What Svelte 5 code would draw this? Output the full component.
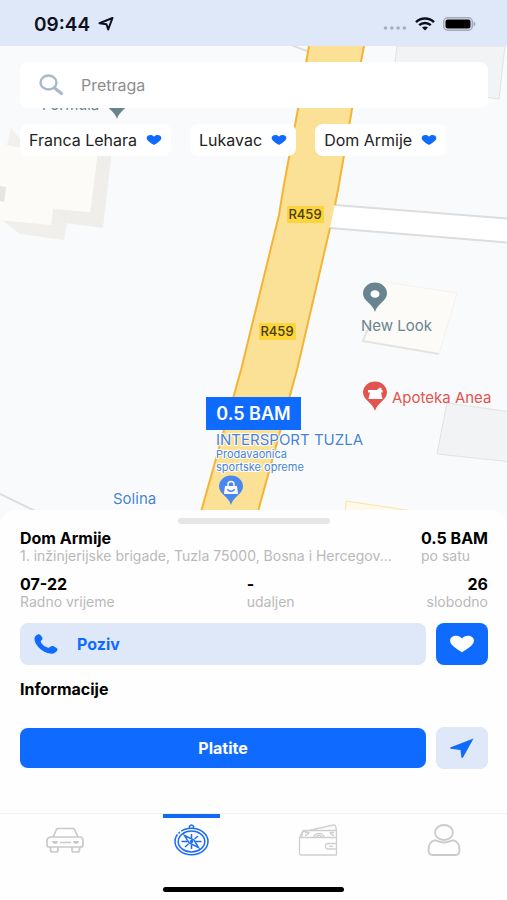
<script>
	const places = ['Franca Lehara', 'Lukavac', 'Dom Armije'];

	const heart =
		'M12 21C10 19.300 1 13.500 1 7.700 1 4 3.700 2 6.600 2c2.300 0 4.300 1.300 5.400 3.200C13.100 3.300 15.100 2 17.400 2 20.300 2 23 4 23 7.700 23 13.500 14 19.300 12 21z';
	const pin = 'M0 28C-2 20-12 17-12 9.500A12 11 0 0 1 12 9.500C12 17 2 20 0 28z';

	let search = $state('');
	let active = $state('map');
</script>

<div class="screen">
	<header class="status">
		<div class="time">
			<span>09:44</span>
			<svg width="16" height="14" viewBox="0 0 16 14">
				<path d="M14.500 1 10.200 12.500 8.500 7.200 1.500 6.200z" fill="none" stroke="#0c101c" stroke-width="2" stroke-linejoin="round" />
			</svg>
		</div>
		<div class="signals">
			<svg width="24" height="18" viewBox="0 0 24 18" fill="#a6afbf">
				<circle cx="2.500" cy="13" r="1.800" /><circle cx="8.800" cy="13" r="1.800" />
				<circle cx="15.100" cy="13" r="1.800" /><circle cx="21.400" cy="13" r="1.800" />
			</svg>
			<svg width="20" height="14" viewBox="0 0 20 14" fill="none" stroke="#0c101c" stroke-width="2.500">
				<path d="M1 5.200C6 .300 14 .300 19 5.200M4.200 8.200c3.300-3 8.300-3 11.600 0" />
				<path d="M7 10.600c1.700-1.500 4.300-1.500 6 0L10 13.500z" fill="#0c101c" stroke="none" />
			</svg>
			<svg width="33" height="14" viewBox="0 0 33 14">
				<rect x=".7" y=".7" width="28.600" height="12.600" rx="4" fill="none" stroke="#a2a9b8" stroke-width="1.400" />
				<rect x="2.500" y="2.500" width="25" height="9" rx="2" fill="#000" />
				<path d="M30.500 4.500c2.500.500 2.500 4.500 0 5z" fill="#a2a9b8" />
			</svg>
		</div>
	</header>

	<main>
		<section class="map">
			<svg class="canvas" viewBox="0 46 507 480" preserveAspectRatio="xMinYMin slice">
				<!-- buildings -->
				<path d="M397 46 392 85 499 99 505 46z" fill="#f2f3f5" stroke="#e0e2e4" />
				<path d="M98 150h14l-9 78-38-5-12-14 37 3z" fill="#f0eeea" />
				<path d="M53 208l14 16-3 16-44-6-18-14 49 4z" fill="#f1efeb" />
				<path d="M11 128l10 12v8L7 145z" fill="#f2f0ed" />
				<path d="M0 144l20 4V132l79 10-9 70-37-4-2 17-51-5z" fill="#fcfbf7" />
				<path d="M0 186l6 1-2 15-4-1z" fill="#e6e5e2" />
				<path d="M379 281l78 12-18 61-76-13z" fill="#fcfbf8" />
				<path d="M379 281l78 12-18 61" fill="none" stroke="#f5f3ef" />
				<path d="M439 354l-76-13 8-20" fill="none" stroke="#e5e3e0" stroke-width="2" />
				<path d="M447 403l65 9v50l-75-8z" fill="#f2f3f5" stroke="#e0e2e4" />
				<path d="M346 501l168 25-170 6z" fill="#fef9e8" stroke="#fae3a5" />

				<!-- streets -->
				<path d="M330 205l182 14v24l-184-15z" fill="#fff" />
				<path d="M335 205l177 14M330 228l182 15M0 494l60 29M291 45l16 6" fill="none" stroke="#dcdddf" stroke-width="2" />
				<path
					d="M309 46 298 109 283 190 279 215 241 370 197 526H254L297 370 330 228 338 190 352 109 364 46z"
					fill="#fbe196"
				/>
				<path
					d="M309 46 298 109 283 190 279 215 241 370 197 526M254 526 297 370 330 228M335 205 338 190 352 109 364 46"
					fill="none"
					stroke="#f5b436"
					stroke-width="2"
				/>

				<g class="road">
					<rect x="287" y="206" width="37" height="17" />
					<text x="305" y="219">R459</text>
					<rect x="259" y="323" width="37" height="17" />
					<text x="277" y="336">R459</text>
				</g>

				<!-- points of interest -->
				<g class="slate">
					<text x="42" y="110">Formula</text>
					<path d={pin} transform="translate(117 91)" />
					<text x="361" y="331">New Look</text>
					<path d={pin} transform="translate(375 284)" />
					<ellipse cx="375" cy="294" rx="4.500" ry="3.800" fill="#fff" />
				</g>
				<g class="red">
					<path d={pin} transform="translate(375 383)" />
					<path d="M368 390h9l3-2.500 2 1.200-1 1.300h1.500v2.500h-1.500l1.500 6.500h-14l1.500-6.500h-2z" fill="#fff" />
					<text x="392" y="403">Apoteka Anea</text>
				</g>
				<g class="blue">
					<text x="216" y="445">INTERSPORT TUZLA</text>
					<text class="small" x="216" y="458">Prodavaonica</text>
					<text class="small" x="216" y="471">sportske opreme</text>
					<path d={pin} transform="translate(231 477)" />
					<path d="M225 486h12l1 8h-14z" fill="#fff" />
					<path d="M228 487v-2.500c0-4 6-4 6 0v2.500" fill="none" stroke="#fff" stroke-width="1.400" />
					<path d="M227.500 489c1 3 6 3 7 0" fill="none" stroke="#4a87ee" stroke-width="1.300" />
					<text x="113" y="504">Solina</text>
				</g>
			</svg>

			<div class="overlay">
				<label class="search">
					<svg width="24" height="22" viewBox="0 0 24 22" fill="none" stroke="#a9b8cc">
						<ellipse cx="9.500" cy="8.500" rx="8" ry="7" stroke-width="2.400" />
						<path d="M15.500 14l7 5.500" stroke-width="3.200" stroke-linecap="round" />
					</svg>
					<input type="text" placeholder="Pretraga" aria-label="Pretraga" bind:value={search} />
				</label>
				<div class="chips">
					{#each places as place}
						<button class="chip">
							{place}
							<svg width="16" height="12" viewBox="0 0 24 23" preserveAspectRatio="none"><path d={heart} fill="#0f6bff" /></svg>
						</button>
					{/each}
				</div>
			</div>
			<button class="price">0.5 BAM</button>
		</section>

		<section class="sheet">
			<div class="handle"></div>
			<div class="row">
				<div class="address">
					<h1>Dom Armije</h1>
					<p>1. inžinjerijske brigade, Tuzla 75000, Bosna i Hercegov...</p>
				</div>
				<div>
					<strong>0.5 BAM</strong>
					<p>po satu</p>
				</div>
			</div>
			<div class="row stats">
				<div>
					<strong>07-22</strong>
					<p>Radno vrijeme</p>
				</div>
				<div>
					<strong>-</strong>
					<p>udaljen</p>
				</div>
				<div class="right">
					<strong>26</strong>
					<p>slobodno</p>
				</div>
			</div>
			<div class="actions">
				<button class="call">
					<svg width="24" height="20" viewBox="0 0 24 20">
						<path
							d="M.500 4.500C.500 2.500 3 .300 5 .300c1.200 0 3.500 3 3.500 4.200 0 1.500-2 2-1.700 3.200.800 2.500 4.200 5.200 7.400 6 1.400.300 2.300-1.600 4-1.600 1.500 0 5.300 2 5.300 3.200 0 1.800-2.800 4.200-5.300 4.400C10.500 20 .500 12 .500 4.500z"
							fill="#0f6bff"
						/>
					</svg>
					Poziv
				</button>
				<button class="square solid" aria-label="Omiljeno">
					<svg width="26" height="20" viewBox="0 0 24 23" preserveAspectRatio="none"><path d={heart} fill="#fff" /></svg>
				</button>
			</div>
			<h2>Informacije</h2>
			<div class="actions">
				<button class="pay">Platite</button>
				<button class="square" aria-label="Navigacija">
					<svg width="24" height="20" viewBox="0 0 24 20">
						<path d="M23.500.500 13 19.500c-.500.800-1.500.500-1.600-.300L10.500 12 .900 10.700c-1-.200-1-1.200-.100-1.500z" fill="#0f6bff" />
					</svg>
				</button>
			</div>
		</section>
	</main>

	<nav>
		<button class:active={active === 'car'} onclick={() => (active = 'car')} aria-label="Vozila">
			<svg width="40" height="32" viewBox="0 0 40 32" fill="none" stroke="#c9c9c9" stroke-width="1.700" stroke-linejoin="round">
				<path d="M8 13 11.500 5.500Q12 4.500 13.500 4.500h14q1.500 0 2 1L33 13M5 13h31q2 1 2 3.500V21q0 2-2 2H4q-2 0-2-2v-4.500Q2 14 5 13z" />
				<path d="M5.500 23v3q0 2 2 2H11q2 0 2-2v-3M27 23v3q0 2 2 2h3.500q2 0 2-2v-3M15 18.500h11" />
				<path d="M7 17h6q-.500 3-3 3t-3-3zM28 17h6q-.500 3-3 3t-3-3z" fill="#c9c9c9" stroke="none" />
			</svg>
		</button>
		<button class:active={active === 'map'} onclick={() => (active = 'map')} aria-label="Mapa">
			<svg width="40" height="32" viewBox="0 0 40 32" fill="none" stroke="#1c6df2" stroke-width="1.500">
				<ellipse cx="20.500" cy="17.500" rx="16.500" ry="13.300" />
				<ellipse cx="20.500" cy="17.500" rx="13.300" ry="10.500" />
				<path d="M18.500 4V2.300Q20.500-.300 22.500 2.300V4M20.500 10v4m0 7v4M10.500 17.500h6m8 0h6" />
				<path d="M13.500 11.500l9.500 4.500 4.500 7.500-9.500-4.500zM14 23l3.500-3M27 12 23.500 15" />
				<circle cx="20.500" cy="17.500" r="1" fill="#1c6df2" />
				<path d="M8.500 6l2 3M5.500 9l3 2" stroke="#fff" />
			</svg>
		</button>
		<button class:active={active === 'wallet'} onclick={() => (active = 'wallet')} aria-label="Novčanik">
			<svg width="40" height="32" viewBox="0 0 40 32" fill="none" stroke="#cfcfcf" stroke-width="1.300" stroke-linejoin="round">
				<path d="M1.500 13.500H38.500V31H3q-1.500 0-1.500-1.500zM1.500 13.500 5 6.500H38.500v7M4 8 35.500 1q2-.400 2.200 1.500l.8 4M5 6.500 3.500 13.500" />
				<path d="M15.500 13.500c2-5.500 9-5.500 11 0M18 13.500c1-3 5-3 6 0M7 8.500h4q-1 2.500-4 3M36 8.500h-4q1 2.500 4 3" />
				<path d="M38.500 19.500H30q-2.500 0-2.500 2.800T30 25h8.500M31 22.300h4" />
			</svg>
		</button>
		<button class:active={active === 'user'} onclick={() => (active = 'user')} aria-label="Profil">
			<svg width="40" height="32" viewBox="0 0 40 32" fill="none" stroke="#cbcbcb" stroke-width="1.800">
				<ellipse cx="20" cy="8.500" rx="9" ry="7.500" />
				<path d="M10.500 16.500C7 17 4.500 20.500 4.500 25.500q0 5.500 4 5.500h23q4 0 4-5.500c0-5-2.500-8.500-6-9-3-.400-5 2-9.500 2s-6.500-2.400-9.500-2z" />
			</svg>
		</button>
	</nav>
	<div class="home"></div>
</div>

<style>
	:global(body) {
		margin: 0;
		background: #fefefe;
	}
	.screen {
		display: flex;
		flex-direction: column;
		min-height: 100vh;
		font-family: Inter, 'Liberation Sans', sans-serif;
		font-size: 16px;
		color: #000;
	}
	button {
		border: none;
		padding: 0;
		font: inherit;
		cursor: pointer;
	}
	svg {
		display: block;
		flex-shrink: 0;
	}
	h1,
	h2,
	p {
		margin: 0;
	}

	.status {
		display: flex;
		justify-content: space-between;
		align-items: center;
		height: 46px;
		padding: 2px 31px 0 34px;
		box-sizing: border-box;
		background: #dee8f9;
	}
	.time,
	.signals {
		display: flex;
		align-items: center;
		gap: 8px;
	}
	.time {
		font-size: 19px;
		font-weight: 600;
		color: #0c101c;
	}

	main {
		flex: 1;
		display: flex;
		flex-direction: column;
	}
	.map {
		position: relative;
		flex: 1;
		min-height: 480px;
		overflow: hidden;
		background: #f8fafc;
	}
	.canvas {
		position: absolute;
		width: 100%;
		height: 100%;
	}
	.canvas text {
		font-size: 15px;
	}
	.road rect {
		fill: #fbd53b;
	}
	.canvas .road text {
		font-size: 13px;
		font-weight: 500;
		fill: #4b3d12;
		text-anchor: middle;
	}
	.slate {
		fill: #68858f;
	}
	.red {
		fill: #e2544f;
	}
	.blue {
		fill: #4a87ee;
	}
	.blue text {
		fill: #4683d8;
		paint-order: stroke;
		stroke: #fff;
		stroke-width: 2px;
	}
	.canvas .small {
		font-size: 11px;
	}
	.overlay {
		position: relative;
		padding: 16px 19px 0 20px;
	}
	.search {
		display: flex;
		align-items: center;
		gap: 18px;
		height: 46px;
		padding: 0 19px;
		border-radius: 8px;
		background: #fff;
	}
	.search input {
		flex: 1;
		min-width: 0;
		border: none;
		outline: none;
		padding: 0;
		background: none;
		font: inherit;
	}
	.search input::placeholder {
		color: #8d8d8d;
		opacity: 1;
	}
	.chips {
		display: flex;
		gap: 19px;
		margin-top: 16px;
	}
	.chip {
		display: flex;
		align-items: center;
		gap: 9px;
		height: 32px;
		padding: 0 9px;
		border-radius: 8px;
		background: #fff;
		color: #222;
		white-space: nowrap;
	}
	.price {
		position: absolute;
		left: 206px;
		top: 351px;
		width: 95px;
		height: 33px;
		background: #0f6bff;
		color: #fff;
		font-size: 18px;
		font-weight: 600;
	}

	.sheet {
		position: relative;
		margin-top: -16px;
		padding: 8px 19px 44px 20px;
		border-radius: 16px 16px 0 0;
		background: #fefefe;
	}
	.handle {
		width: 152px;
		height: 6px;
		margin: 0 auto 6px;
		border-radius: 3px;
		background: #e6e6e6;
	}
	.row {
		display: flex;
		justify-content: space-between;
		gap: 16px;
	}
	.address {
		min-width: 0;
	}
	h1,
	h2,
	strong {
		display: block;
		font-size: 16px;
		font-weight: 700;
		line-height: 17px;
	}
	p {
		overflow-x: clip;
		font-size: 14px;
		line-height: 17px;
		color: #b9b9b9;
		white-space: nowrap;
		text-overflow: ellipsis;
	}
	.stats {
		margin: 12px 0 13px;
	}
	.right {
		text-align: right;
	}
	.actions {
		display: flex;
		align-items: center;
		gap: 10px;
	}
	.call,
	.pay {
		flex: 1;
		border-radius: 8px;
		font-weight: 700;
	}
	.call {
		display: flex;
		align-items: center;
		gap: 19px;
		height: 42px;
		padding: 0 14px;
		background: #dee8f9;
		color: #0f6bff;
	}
	.pay {
		height: 40px;
		background: #0f6bff;
		color: #fff;
	}
	.square {
		display: flex;
		align-items: center;
		justify-content: center;
		width: 52px;
		height: 42px;
		border-radius: 8px;
		background: #dee8f9;
	}
	.solid {
		background: #0f6bff;
	}
	h2 {
		margin: 16px 0 29px;
	}

	nav {
		display: grid;
		grid-template-columns: repeat(4, 1fr);
		padding-left: 2px;
		border-top: 1px solid #f3f3f3;
	}
	nav button {
		display: flex;
		flex-direction: column;
		align-items: center;
		gap: 6px;
		height: 73px;
		background: none;
	}
	nav button::before {
		content: '';
		width: 57px;
		height: 4px;
	}
	nav .active::before {
		background: #1069f5;
	}
	.home {
		width: 181px;
		height: 5px;
		margin: 0 auto 8px;
		border-radius: 3px;
		background: #000;
	}
</style>
